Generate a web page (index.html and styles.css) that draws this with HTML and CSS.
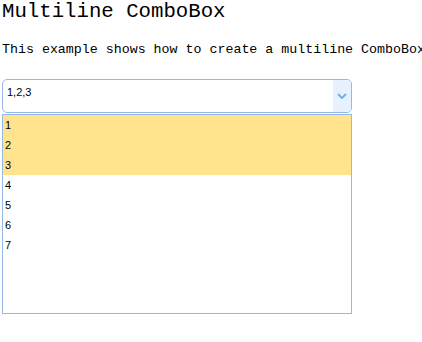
FILE: index.html
```html
<!DOCTYPE html>
<html>
<head>
    <title>Multiline ComboBox</title>
    <link rel="stylesheet" href="styles.css">
</head>
<body>
    <h2>Multiline ComboBox</h2>
    <p class="desc">This example shows how to create a multiline ComboBox.</p>
    <div class="combo">
        <span class="combo-text">1,2,3</span>
        <span class="combo-arrow">
            <svg width="10" height="6" viewBox="0 0 10 6"><path d="M1 1 L5 5 L9 1" fill="none" stroke="#6fb1f0" stroke-width="2"/></svg>
        </span>
    </div>
    <div class="combo-panel">
        <div class="item selected">1</div>
        <div class="item selected">2</div>
        <div class="item selected">3</div>
        <div class="item">4</div>
        <div class="item">5</div>
        <div class="item">6</div>
        <div class="item">7</div>
    </div>
</body>
</html>
```

FILE: styles.css
```css
body {
    margin: 0;
    padding: 0 2px;
    font-family: "Liberation Mono", monospace;
    color: #000;
    background: #fff;
    overflow: hidden;
}
h2 {
    font-size: 20.7px;
    font-weight: normal;
    margin: 0;
    line-height: 24px;
    white-space: nowrap;
}
.desc {
    font-size: 13.3px;
    margin: 16px 0 0 0;
    line-height: 20px;
    white-space: nowrap;
}
.combo {
    margin-top: 19px;
    width: 348px;
    height: 32px;
    border: 1px solid #95b8e7;
    border-radius: 5px;
    display: flex;
    overflow: hidden;
}
.combo-text {
    flex: 1;
    font-family: "Liberation Sans", sans-serif;
    font-size: 11px;
    padding: 6px 0 0 4px;
}
.combo-arrow {
    width: 18px;
    background: #e8f1ff;
    display: flex;
    align-items: center;
    justify-content: center;
}
.combo-panel {
    margin-top: 1px;
    width: 348px;
    height: 198px;
    border: 1px solid #95b8e7;
}
.item {
    height: 20px;
    line-height: 20px;
    padding-left: 2px;
    font-family: "Liberation Sans", sans-serif;
    font-size: 11px;
}
.item.selected {
    background: #ffe48d;
}
```
